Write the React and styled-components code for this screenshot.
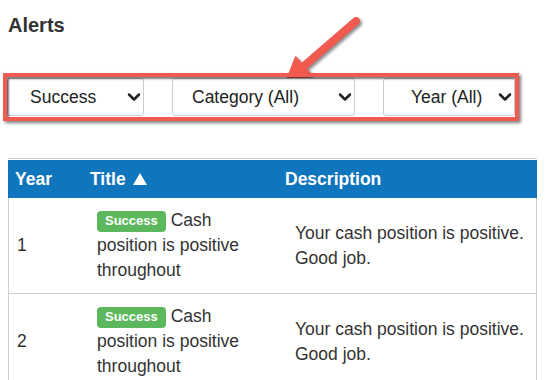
import React from "react";
import styled, { createGlobalStyle } from "styled-components";
import { ChevronDown } from "lucide-react";

const rows = [
  { year: 1, title: "Cash position is positive throughout", description: "Your cash position is positive. Good job." },
  { year: 2, title: "Cash position is positive throughout", description: "Your cash position is positive. Good job." },
];

const filters = [
  { label: "Success", width: 137, pad: 22 },
  { label: "Category (All)", width: 183, pad: 19 },
  { label: "Year (All)", width: 132, pad: 27 },
];

function App() {
  return (
    <Page>
      <GlobalStyle />
      <Heading>Alerts</Heading>

      <Arrow viewBox="278 0 90 76">
        <line x1="356" y1="8" x2="304" y2="53" stroke="#f15a4f" strokeWidth="8" strokeLinecap="round" />
        <polygon
          points="286,69 295.8,44.3 311.6,62.4"
          fill="#f15a4f"
          stroke="#f15a4f"
          strokeWidth="2"
          strokeLinejoin="round"
        />
      </Arrow>

      <Highlight>
        {filters.map((f) => (
          <SelectWrap key={f.label} width={f.width}>
            <Select pad={f.pad} defaultValue={f.label}>
              <option>{f.label}</option>
            </Select>
            <Chevron size={20} strokeWidth={3} />
          </SelectWrap>
        ))}
      </Highlight>

      <Table>
        <Head>
          <HeadRow>
            <HeadCell>Year</HeadCell>
            <HeadCell>
              Title
              <SortIcon viewBox="0 0 14 12">
                <polygon points="7,0 14,12 0,12" fill="#fff" />
              </SortIcon>
            </HeadCell>
            <HeadCell>Description</HeadCell>
          </HeadRow>
        </Head>
        <Body>
          {rows.map((row) => (
            <Row key={row.year}>
              <YearCell>{row.year}</YearCell>
              <TitleCell>
                <Label>Success</Label> {row.title}
              </TitleCell>
              <DescCell>{row.description}</DescCell>
            </Row>
          ))}
        </Body>
      </Table>
    </Page>
  );
}

const GlobalStyle = createGlobalStyle`
  html, body {
    margin: 0;
    overflow: hidden;
    background: #fff;
  }
  body {
    font-family: "Liberation Sans", Arial, sans-serif;
    color: #333;
  }
`;

const Page = styled.div`
  position: relative;
  padding: 0 8px;
`;

const Heading = styled.h4`
  margin: 13px 0 0;
  font-size: 20px;
  line-height: 24px;
  font-weight: 700;
  color: #333;
`;

const Arrow = styled.svg`
  position: absolute;
  left: 278px;
  top: 0;
  width: 90px;
  height: 76px;
  overflow: visible;
  filter: drop-shadow(2px 2px 1.5px rgba(0, 0, 0, 0.45));
`;

const Highlight = styled.div`
  position: relative;
  box-sizing: border-box;
  width: 516px;
  margin: 36px 0 0 -5px;
  padding: 1px 0;
  border: 4px solid #f15a4f;
  display: flex;
  gap: 28px;
  box-shadow: 2px 2px 3px rgba(0, 0, 0, 0.5);

  &::after {
    content: "";
    position: absolute;
    inset: 0;
    pointer-events: none;
    box-shadow: inset 2px 2px 2px rgba(0, 0, 0, 0.5);
  }
`;

const SelectWrap = styled.div`
  position: relative;
  width: ${(p) => p.width}px;
  flex: none;
`;

const Select = styled.select`
  display: block;
  box-sizing: border-box;
  width: 100%;
  height: 38px;
  margin: 0;
  padding: 0 0 0 ${(p) => p.pad}px;
  appearance: none;
  border: 1px solid #ccc;
  border-radius: 3px;
  background: #fff;
  font-family: "Liberation Sans", Arial, sans-serif;
  font-size: 17.5px;
  color: #222;
  outline: none;
`;

const Chevron = styled(ChevronDown)`
  position: absolute;
  right: 0;
  top: 9px;
  color: #222;
  pointer-events: none;
`;

const Table = styled.div`
  margin-top: 37px;
  font-size: 17.5px;
  line-height: 25px;
`;

const Head = styled.div`
  border-top: 1px solid #cfcfcf;
  padding-top: 1px;
`;

const HeadRow = styled.div`
  display: grid;
  grid-template-columns: 75px 195px 1fr;
  align-items: center;
  height: 38px;
  background: #0f76bd;
  color: #fff;
  font-weight: 700;
`;

const HeadCell = styled.div`
  padding: 0 7px;
  display: flex;
  align-items: center;
`;

const SortIcon = styled.svg`
  width: 14px;
  height: 12px;
  margin-left: 7px;
`;

const Body = styled.div`
  border-left: 1px solid #cfcfcf;
  border-right: 1px solid #cfcfcf;
`;

const Row = styled.div`
  display: grid;
  grid-template-columns: 78px 198px 1fr;
  align-items: center;
  border-bottom: 1px solid #cfcfcf;
`;

const YearCell = styled.div`
  padding: 10px 8px;
`;

const TitleCell = styled.div`
  padding: 10px 20px 10px 10px;
`;

const DescCell = styled.div`
  padding: 10px 4px 10px 10px;
`;

const Label = styled.span`
  display: inline-block;
  padding: 3px 8px 4px;
  font-size: 13px;
  font-weight: 700;
  line-height: 14px;
  color: #fff;
  background: #5cb85c;
  border-radius: 4px;
  white-space: nowrap;
  vertical-align: 1px;
`;

export default App;
